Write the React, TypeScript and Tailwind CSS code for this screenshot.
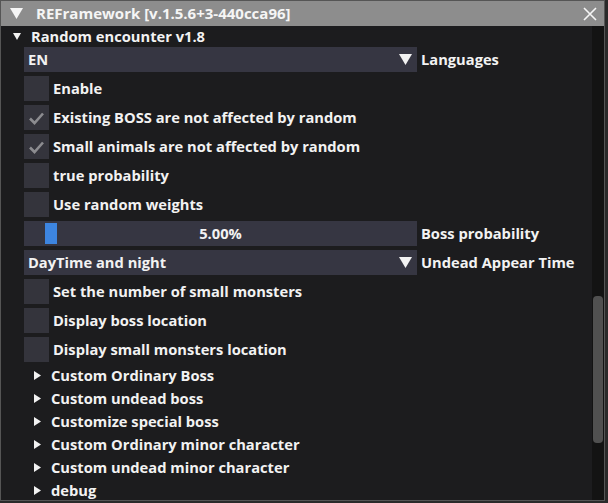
import { useState } from 'react'

const font = { fontFamily: '"Open Sans", "Noto Sans", sans-serif' }

function Check({ label, checked }: { label: string; checked?: boolean }) {
  return (
    <div className="flex items-center gap-1 h-[25px]">
      <div className="w-[25px] h-[25px] bg-[#34343c] flex items-center justify-center shrink-0">
        {checked && (
          <svg width="17" height="14" viewBox="0 0 17 14">
            <path d="M2 7.5 L6.5 12 L15 2.5" stroke="#8c8c90" strokeWidth="2.6" fill="none" />
          </svg>
        )}
      </div>
      <span className="text-[14.7px] font-bold text-[#f2f2f2] whitespace-nowrap">{label}</span>
    </div>
  )
}

function Combo({ value, label }: { value: string; label: string }) {
  return (
    <div className="flex items-center gap-1 h-[25px]">
      <div className="w-[393px] h-[25px] bg-[#363642] flex items-center justify-between pl-1 pr-[5px]">
        <span className="text-[14.7px] font-bold text-[#f2f2f2]">{value}</span>
        <svg width="13" height="11" viewBox="0 0 13 11">
          <path d="M0 0 H13 L6.5 11 Z" fill="#f2f2f2" />
        </svg>
      </div>
      <span className="text-[14.7px] font-bold text-[#f2f2f2] whitespace-nowrap">{label}</span>
    </div>
  )
}

function Node({ label }: { label: string }) {
  return (
    <div className="flex items-center h-[19px] pl-[10px] gap-[10px]">
      <svg width="7" height="9" viewBox="0 0 7 9">
        <path d="M0 0 L7 4.5 L0 9 Z" fill="#f2f2f2" />
      </svg>
      <span className="text-[14.7px] font-bold text-[#f2f2f2] whitespace-nowrap">{label}</span>
    </div>
  )
}

export default function App() {
  const [pct] = useState(5)

  return (
    <div className="w-[608px] h-[503px] bg-[#2a2a2a] overflow-hidden" style={font}>
      <div className="w-[605px] h-[501px] border border-[#555] bg-[#1c1c1e] flex flex-col">
        <div className="h-[25px] bg-[#8d8d8d] flex items-center pl-[9px] pr-[7px] shrink-0">
          <svg width="13" height="11" viewBox="0 0 13 11">
            <path d="M0 0 H13 L6.5 11 Z" fill="#f5f5f5" />
          </svg>
          <span className="ml-[13px] text-[15px] font-bold text-[#f5f5f5]">REFramework [v.1.5.6+3-440cca96]</span>
          <svg className="ml-auto" width="14" height="14" viewBox="0 0 14 14">
            <path d="M1 1 L13 13 M13 1 L1 13" stroke="#f5f5f5" strokeWidth="1.6" />
          </svg>
        </div>
        <div className="flex flex-1 min-h-0">
          <div className="flex-1 flex flex-col">
            <div className="flex items-center h-[20px] pl-[12px] gap-[10px]">
              <svg width="8" height="7" viewBox="0 0 8 7">
                <path d="M0 0 H8 L4 7 Z" fill="#f2f2f2" />
              </svg>
              <span className="text-[14.7px] font-bold text-[#f2f2f2]">Random encounter v1.8</span>
            </div>
            <div className="flex flex-col gap-1 pl-[23px] pt-[1px]">
              <Combo value="EN" label="Languages" />
              <Check label="Enable" />
              <Check label="Existing BOSS are not affected by random" checked />
              <Check label="Small animals are not affected by random" checked />
              <Check label="true probability" />
              <Check label="Use random weights" />
              <div className="flex items-center gap-1 h-[25px]">
                <div className="relative w-[393px] h-[25px] bg-[#363642] flex items-center justify-center">
                  <div className="absolute left-[21px] top-[2px] w-[12px] h-[21px] bg-[#3d85e0]" />
                  <span className="text-[14.7px] font-bold text-[#f2f2f2]">{pct.toFixed(2)}%</span>
                </div>
                <span className="text-[14.7px] font-bold text-[#f2f2f2] whitespace-nowrap">Boss probability</span>
              </div>
              <Combo value="DayTime and night" label="Undead Appear Time" />
              <Check label="Set the number of small monsters" />
              <Check label="Display boss location" />
              <Check label="Display small monsters location" />
            </div>
            <div className="flex flex-col gap-1 pl-[23px] pt-1">
              <Node label="Custom Ordinary Boss" />
              <Node label="Custom undead boss" />
              <Node label="Customize special boss" />
              <Node label="Custom Ordinary minor character" />
              <Node label="Custom undead minor character" />
              <Node label="debug" />
            </div>
          </div>
          <div className="w-[12px] bg-[#131313] flex flex-col pt-[270px] px-[1px]">
            <div className="h-[147px] rounded-[4px] bg-[#505050]" />
          </div>
        </div>
      </div>
    </div>
  )
}
